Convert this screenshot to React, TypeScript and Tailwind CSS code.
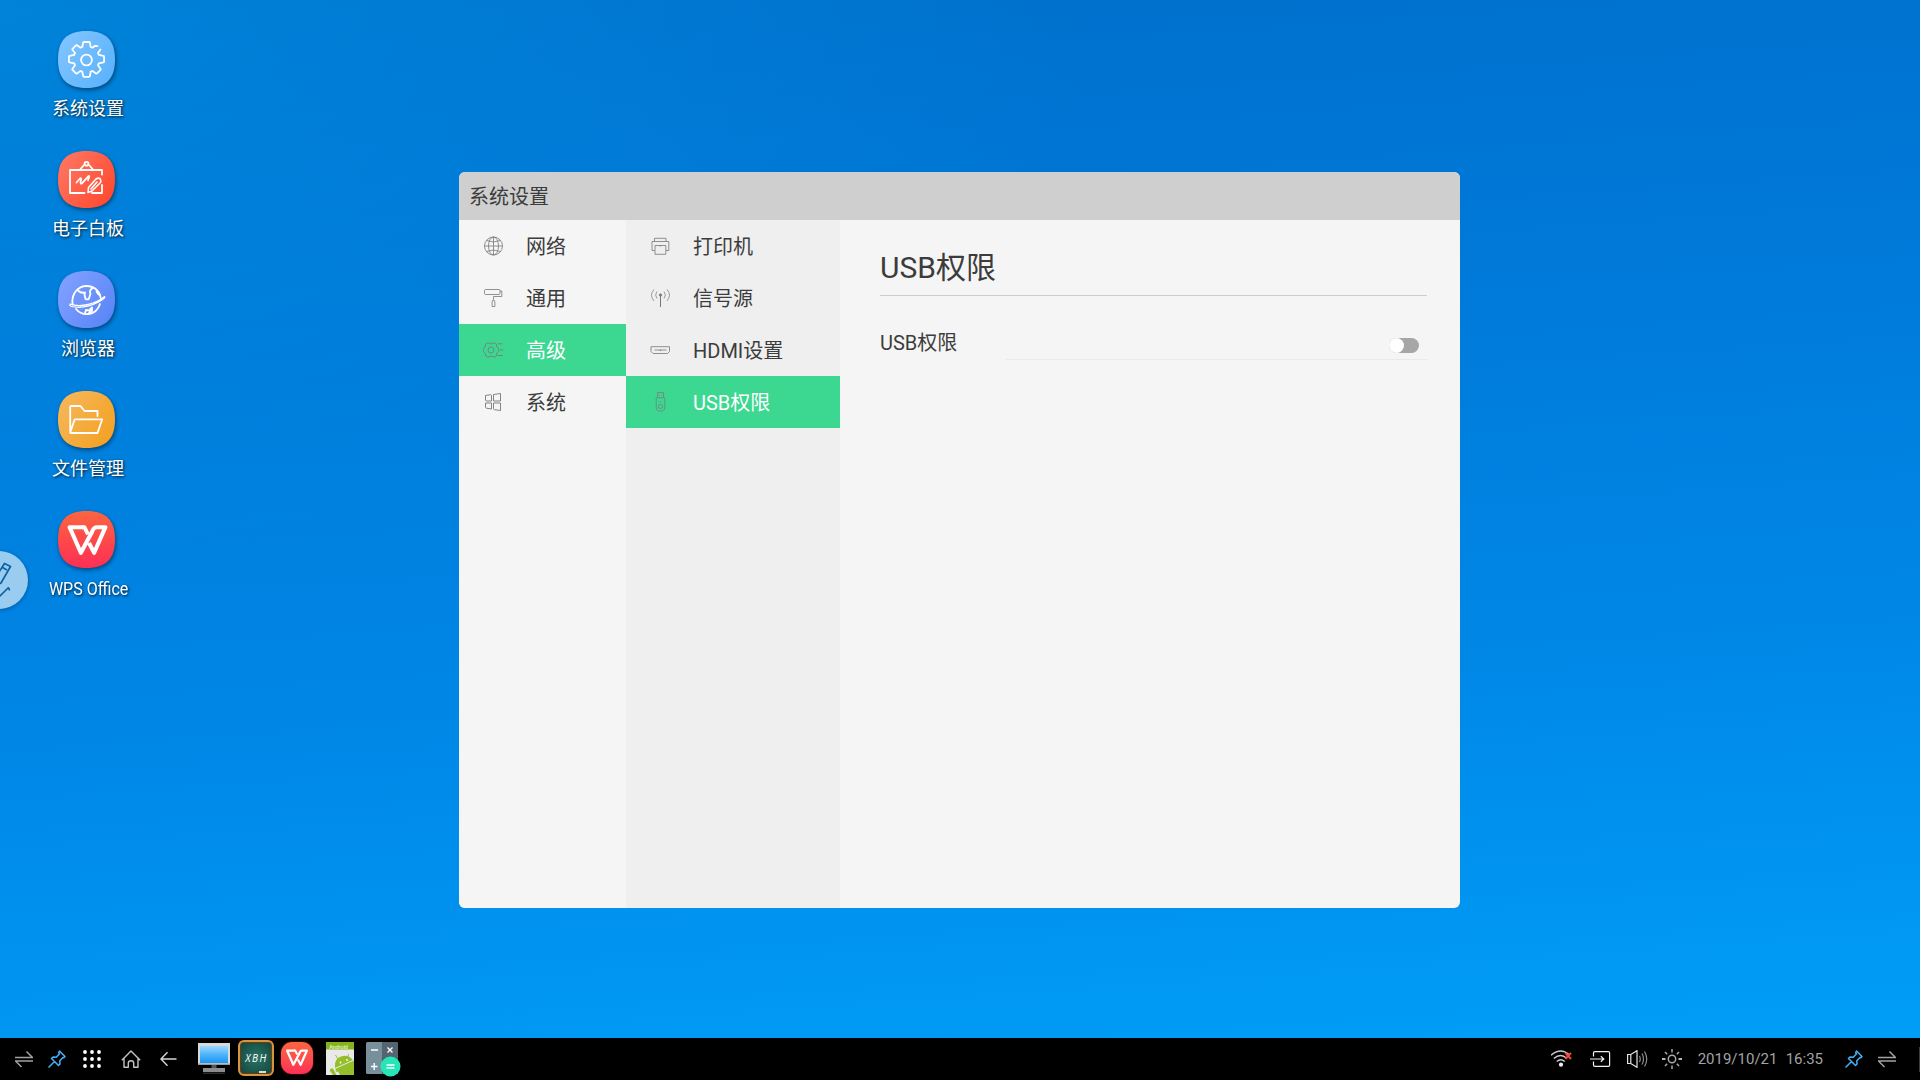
import React from 'react';

type IconProps = { className?: string };

function Globe({ className }: IconProps) {
  return (
    <svg className={className} width="20" height="20" viewBox="0 0 20 20" fill="none" stroke="currentColor" strokeWidth="0.8">
      <circle cx="10.500" cy="10" r="9" />
      <ellipse cx="10.500" cy="10" rx="5" ry="9" />
      <path d="M10.500 1v18M1.500 10h18M3.700 4.500q6.800 3 13.600 0M3.700 15.500q6.800-3 13.600 0" />
    </svg>
  );
}

function Roller({ className }: IconProps) {
  return (
    <svg className={className} width="20" height="20" viewBox="0 0 20 20" fill="none" stroke="currentColor" strokeWidth="0.8">
      <rect x="1.500" y="1.500" width="15.500" height="5" rx="1" />
      <path d="M17 3h1.800v5.500h-8.300v3M9.900 12h1.200l.8 2v4.500H9.100V14z" />
    </svg>
  );
}

function GearLines({ className }: IconProps) {
  return (
    <svg className={className} width="22" height="20" viewBox="0 0 22 20" fill="none" stroke="currentColor" strokeWidth="1" strokeLinejoin="round">
      <path d="M4.800 2.800Q8 5 11.200 2.800L13.300 4Q13.200 7.500 15.800 8.800V11.200Q13.200 12.500 13.300 16L11.200 17.200Q8 15 4.800 17.200L2.700 16Q2.800 12.500.2 11.200V8.800Q2.800 7.500 2.700 4z" />
      <circle cx="8" cy="10" r="3" />
      <path d="M14.500 3.800h5.200M17 10h3.200M14.500 15.500h5.200" />
    </svg>
  );
}

function Windows({ className }: IconProps) {
  return (
    <svg className={className} width="20" height="20" viewBox="0 0 20 20" fill="none" stroke="currentColor" strokeWidth="0.9" strokeLinejoin="round">
      <path d="M2.500 3.500l5-.8q1 0 1 1V9h-5q-1 0-1-1zM10.500 2.500l7-1V9h-7zM2.500 11h6v6l-5-.8q-1-.2-1-1zM10.500 11h7v7.500l-6-.8q-1-.2-1-1z" />
    </svg>
  );
}

function Printer({ className }: IconProps) {
  return (
    <svg className={className} width="20" height="20" viewBox="0 0 20 20" fill="none" stroke="currentColor" strokeWidth="0.8">
      <path d="M4.500 5.500v-3.200h11.500v3.200M4.500 14.500h-2.500v-9h16.800v9h-2.800M5 9.500h10.800v8.800H5z" />
      <path d="M9.900 10h1" strokeWidth="1" />
    </svg>
  );
}

function Antenna({ className }: IconProps) {
  return (
    <svg className={className} width="21" height="20" viewBox="0 0 21 20" fill="none" stroke="currentColor" strokeWidth="0.7">
      <circle cx="10.500" cy="7" r="1.200" fill="currentColor" />
      <path d="M10.500 8v11" strokeWidth="1" />
      <path d="M7 3.500q-2.800 3.500 0 7M14 3.500q2.800 3.500 0 7M4 1.500q-5 5.500 0 11.500M17 1.500q5 5.500 0 11.500" />
    </svg>
  );
}

function Hdmi({ className }: IconProps) {
  return (
    <svg className={className} width="20" height="20" viewBox="0 0 20 20" fill="none" stroke="currentColor" strokeWidth="0.8">
      <path d="M1 6.700h18.500v4.800L17.500 13.500H3L1 11.500zM4.500 10h12" />
      <path d="M9.900 10.300h1" strokeWidth="1.200" />
    </svg>
  );
}

function UsbStick({ className }: IconProps) {
  return (
    <svg className={className} width="20" height="20" viewBox="0 0 20 20" fill="none" stroke="currentColor" strokeWidth="0.9">
      <path d="M7.500 5.500v-5h6v5M9.200 2.500v1.200M11.800 2.500v1.200M10.500 9v1.200" />
      <path d="M6.200 5.700h8.600v9.500q0 4-4.300 4t-4.300-4z" />
      <circle cx="10.500" cy="14.500" r="2.100" />
    </svg>
  );
}

function WpsGlyph({ className }: IconProps) {
  return (
    <svg className={className} viewBox="0 0 42 32" fill="none">
      <path d="M17 3H3.500L14.500 28 25 8.500Q26.500 3.200 30 3H38.500L27.500 28 22.500 18.500" stroke="currentColor" strokeWidth="4" strokeLinejoin="round" />
      <path d="M15.500 3h2.500l3.500 7" stroke="currentColor" strokeWidth="3.800" strokeLinejoin="round" />
    </svg>
  );
}

const stroke = { fill: 'none', stroke: 'white', strokeWidth: 1.8, strokeLinecap: 'round', strokeLinejoin: 'round' } as const;

function SettingsArt() {
  return (
    <svg width="57" height="57" viewBox="0 0 57 57" {...stroke}>
      <path d="M39.500 15.200 37 14.800 34.500 16.700 32.700 16 31.800 11.500Q31.700 11 31 11h-5q-.7 0-.8.500L24.300 16l-1.800.7L19 14.200q-.5-.3-1 .1l-3.500 3.500q-.4.500-.1 1L17 22l-.8 1.900-4.700.9q-.6.100-.6.800v5q0 .7.600.8l4.700 1 .8 1.800-2.600 3.700q-.3.500.1 1L18 42.400q.5.400 1 .1l3.500-2.500 1.800.7.900 4.500q.1.700.8.700h5q.7 0 .8-.7l.9-4.500 1.800-.7 3.500 2.500q.5.300 1-.1l3.500-3.500q.4-.5.100-1L40 34.200l.8-1.800 4.700-1q.6-.1.600-.8v-5q0-.7-.6-.8l-4.700-.9L40 22l2.400-3.500" />
      <circle cx="28.500" cy="29" r="5.400" />
    </svg>
  );
}

function BoardArt() {
  return (
    <svg width="57" height="57" viewBox="0 0 57 57" {...stroke}>
      <path d="M44 23.500V19H12v23h14.500M34 42h10v-8M22 18.500l4.500-5M35 18.500l-4.500-5" />
      <circle cx="28.500" cy="12.800" r="1.900" />
      <path d="M18.500 31.500l3.500-4q1-.8 1.200.5l-.7 3.500q.1 2 1.700.7l6.300-7q1-.8.700.5l-1.200 3.500" />
      <path d="M30 41.500l.5-5 7.500-8.500q3-2 4.500.5 1 2-.5 3.500L34 40z M33 38l6-7" strokeWidth="1.600" />
    </svg>
  );
}

function BrowserArt() {
  return (
    <svg width="57" height="57" viewBox="0 0 57 57" {...stroke}>
      <path d="M14.600 33.500C13 23 20 15 28.500 15S42 21 42.700 27M18 38c6 7.500 20 7.500 24-5" />
      <path d="M12 34.500l1.500 1C24 38 38 34 46.500 27l.3-1.500C38 32.500 23 37 12 33z" strokeWidth="1.200" />
      <path d="M20 19.500q3 3 7 2l-.5 2 1 4.500q2 1 3.500-.5l1.500-5q-2-2 2-5.500M38.500 20.500l2 3M27 42l1-3 3 .5 3-3v3.500l-2 2.500M31 42l2-2" />
    </svg>
  );
}

function FolderArt() {
  return (
    <svg width="57" height="57" viewBox="0 0 57 57" {...stroke}>
      <path d="M39.500 25v-5H26.500l-4-5H13q-.8 0-.8.800V41.500l4.500-13.200h27.500L39.500 42H12.500" />
    </svg>
  );
}

function WpsArt() {
  return (
    <div className="flex size-[57px] items-center justify-center text-white">
      <WpsGlyph className="mt-[2px] ml-[2px] h-[33px] w-[43px]" />
    </div>
  );
}

const squircle =
  'M28.500 0C48 0 57 9 57 28.500S48 57 28.500 57 0 48 0 28.500 9 0 28.500 0z';

const desktopItems = [
  { label: '系统设置', from: '#84c6ff', to: '#5cb3fc', vertical: false, Art: SettingsArt },
  { label: '电子白板', from: '#ff7a67', to: '#ff4b31', vertical: false, Art: BoardArt },
  { label: '浏览器', from: '#83a3ff', to: '#5c86f8', vertical: false, Art: BrowserArt },
  { label: '文件管理', from: '#f5b95e', to: '#f4a226', vertical: false, Art: FolderArt },
  { label: 'WPS Office', from: '#fc6540', to: '#fd2f55', vertical: true, Art: WpsArt },
];

function DesktopIcons() {
  return (
    <div className="flex w-[177px] flex-col pt-[31px]">
      {desktopItems.map(({ label, from, to, vertical, Art }, i) => (
        <div key={label} className="flex h-[120px] flex-col items-center">
          <div className="relative mr-[4px] size-[57px] drop-shadow-[1px_2px_2px_rgba(0,0,0,0.45)]">
            <svg className="absolute inset-0" width="57" height="57" viewBox="0 0 57 57">
              <defs>
                <linearGradient id={`tile${i}`} x1="0" y1="0" x2={vertical ? 0 : 1} y2={vertical ? 1 : 0.7}>
                  <stop offset="0" stopColor={from} />
                  <stop offset="1" stopColor={to} />
                </linearGradient>
              </defs>
              <path d={squircle} fill={`url(#tile${i})`} />
            </svg>
            <div className="relative">
              <Art />
            </div>
          </div>
          <span
            className={
              'mt-[8px] text-[18px] leading-[26px] whitespace-nowrap text-white [text-shadow:1px_1px_3px_rgba(0,0,0,0.85)] ' +
              (vertical ? 'scale-x-[0.89]' : 'mr-px')
            }
          >
            {label}
          </span>
        </div>
      ))}
    </div>
  );
}

function MenuRow({ label, Icon, active }: { label: string; Icon: (p: IconProps) => React.ReactElement; active?: boolean }) {
  return (
    <div className={'flex h-[52px] items-center pl-[24px] text-[20px] ' + (active ? 'bg-[#3cd891] text-white' : 'text-[#3c3c3c]')}>
      <div className="-mt-px flex w-[43px] shrink-0">
        <Icon className={active ? 'text-[#6f8a7d]' : 'text-[#777777]'} />
      </div>
      <span className="pt-[2px] leading-[28px]">{label}</span>
    </div>
  );
}

function SettingsWindow() {
  return (
    <section className="flex h-[736px] w-[1001px] flex-col overflow-hidden rounded-[6px] bg-[#f5f5f5]">
      <header className="flex h-[48px] shrink-0 items-center bg-[#cfcfcf] pt-[2px] pl-[10px] text-[20px] text-[#3c3c3c]">系统设置</header>
      <div className="flex min-h-0 flex-1">
        <nav className="w-[167px] bg-[#f5f5f5]">
          <MenuRow label="网络" Icon={Globe} />
          <MenuRow label="通用" Icon={Roller} />
          <MenuRow label="高级" Icon={GearLines} active />
          <MenuRow label="系统" Icon={Windows} />
        </nav>
        <nav className="w-[214px] bg-[#efefef]">
          <MenuRow label="打印机" Icon={Printer} />
          <MenuRow label="信号源" Icon={Antenna} />
          <MenuRow label="HDMI设置" Icon={Hdmi} />
          <MenuRow label="USB权限" Icon={UsbStick} active />
        </nav>
        <main className="flex-1 pt-[24px] pr-[33px] pl-[40px] text-[#3c3c3c]">
          <h1 className="h-[52px] border-b border-[#cdcdcd] text-[30px] leading-[48px]">USB权限</h1>
          <div className="flex h-[64px] items-end">
            <span className="w-[126px] self-start pt-[32px] text-[20px] leading-[30px]">USB权限</span>
            <div className="flex h-[22px] flex-1 justify-end border-b border-[#eaeaea] pr-[8px]">
              <div className="flex h-[15px] w-[30px] rounded-full bg-[#a6a6a6]">
                <div className="size-[15px] rounded-full bg-white" />
              </div>
            </div>
          </div>
        </main>
      </div>
    </section>
  );
}

function Swap() {
  return (
    <svg width="18" height="18" viewBox="0 0 18 18" fill="none" stroke="#a3a3a3" strokeWidth="1.500">
      <path d="M0 7.500h17.500L11.500 1.500M18 11H.5l6 6" />
    </svg>
  );
}

function Pin() {
  return (
    <svg width="18" height="18" viewBox="0 0 18 18" fill="none" stroke="#45b0fa" strokeWidth="1.500" strokeLinejoin="round">
      <path d="M11.500 1l5.500 5.500-1.200 1.300-.8-.3-3.200 3.200.2 3.300-1.500 1.500-7-7L5 7l3.300.2 3.200-3.400-.8-1.300zM6.500 11.500L.5 17.500" />
    </svg>
  );
}

function Monitor() {
  return (
    <svg width="32" height="31" viewBox="0 0 32 31">
      <defs>
        <linearGradient id="screen" x1="0" y1="0" x2="0" y2="1">
          <stop offset="0" stopColor="#9bd8ff" />
          <stop offset="0.5" stopColor="#4fb4fb" />
          <stop offset="1" stopColor="#1d96f5" />
        </linearGradient>
      </defs>
      <rect width="32" height="22" fill="#d9d9d9" />
      <rect y="20.500" width="32" height="1.500" fill="#9a9a9a" />
      <rect x="2" y="3" width="28" height="17" fill="url(#screen)" />
      <path d="M13.500 22h5v3h-5z" fill="#555" />
      <path d="M5 25h22v4H5z" fill="#8c8c8c" />
      <path d="M5 29.500h22V31H5z" fill="#2a2a2a" />
    </svg>
  );
}

function Chalkboard() {
  return (
    <div className="relative flex size-[36px] items-center justify-center rounded-[6px] border-2 border-[#d9953c] bg-[#6b3d12] p-px">
      <div className="flex size-full items-center justify-center rounded-[3px] bg-radial from-[#2b7566] to-[#12473f]">
        <span className="pl-px text-[10px] leading-none font-medium tracking-[1.500px] text-white italic [font-family:'Open_Sans',sans-serif]">XBH</span>
      </div>
      <div className="absolute right-[6px] bottom-[1px] h-[2px] w-[7px] bg-[#d8dedb]" />
    </div>
  );
}

function AndroidFile() {
  return (
    <svg width="28" height="33" viewBox="0 0 28 33">
      <rect width="28" height="33" fill="#e9e9e9" />
      <rect width="28" height="7.500" fill="#86b320" />
      <text x="3" y="7" fontSize="6" fontWeight="bold" fill="#d5e8a4" fontFamily="Roboto" textLength="19">Android</text>
      <g fill="#94bf2a">
        <path d="M9 25q-1-8 6-10.500T27 18l1 .8V24L10 30z" />
        <path d="M11.500 28.500L28 21v12H14zM4.500 27q2-1.500 3 .5l3 5.500H7L4 29q-.5-1 .5-2z" />
        <path d="M12 17l-2.500-4M22 15l.5-3" stroke="#94bf2a" strokeWidth="0.900" />
      </g>
      <path d="M9 26.500l19-8.500" stroke="#e9e9e9" strokeWidth="1" />
      <circle cx="14.500" cy="20.500" r="0.900" fill="#fff" />
      <circle cx="21" cy="18" r="0.900" fill="#fff" />
    </svg>
  );
}

function Calculator() {
  return (
    <svg width="35" height="35" viewBox="0 0 35 35" fill="none" stroke="white" strokeWidth="1.400">
      <rect width="32" height="32" rx="1.500" fill="#78909c" stroke="none" />
      <path d="M16 0h14.500Q32 0 32 1.500V16H16z" fill="#546470" stroke="none" />
      <path d="M16 16h16v16H16z" fill="#455a64" stroke="none" />
      <path d="M5 8h7M5 24.500h6.500M8.200 21v7M21.500 5.500l5 5M26.500 5.500l-5 5" />
      <circle cx="24.500" cy="24.500" r="10" fill="#26e6b8" stroke="none" />
      <path d="M20.500 23h8M20.500 26h8" />
    </svg>
  );
}

function Taskbar() {
  return (
    <footer className="flex h-[42px] w-full items-center bg-black text-[#a3a3a3]">
      <div className="flex flex-1 items-center">
        <div className="-mt-px ml-[15px]"><Swap /></div>
        <div className="-mt-px ml-[15px]"><Pin /></div>
        <svg className="-mt-px ml-[17px]" width="18" height="18" viewBox="0 0 18 18" fill="white">
          {[2, 9, 16].flatMap((y) => [2, 9, 16].map((x) => <circle key={`${x}-${y}`} cx={x} cy={y} r="1.900" />))}
        </svg>
        <svg className="-mt-px ml-[20px]" width="20" height="18" viewBox="0 0 20 18" fill="none" stroke="#c4c4c4" strokeWidth="1.400" strokeLinejoin="round">
          <path d="M.8 10.200L10 1l9.200 9.200M3 8.500v8.700h4.300V13q0-2.300 2.700-2.300t2.700 2.300v4.200H17V8.500" />
        </svg>
        <svg className="-mt-px ml-[19px]" width="17" height="16" viewBox="0 0 17 16" fill="none" stroke="#d6d6d6" strokeWidth="1.400">
          <path d="M16.500 8H1.200M7.500 1.200L1 8l6.500 6.800" />
        </svg>
        <div className="-mt-px ml-[21px]"><Monitor /></div>
        <div className="-mt-[3px] ml-[8px]"><Chalkboard /></div>
        <div className="-mt-[3px] ml-[7px] flex size-[32px] items-center justify-center rounded-[11px] bg-linear-to-b from-[#fc6540] to-[#fd2f55] text-white shadow-[0_0_2px_rgba(253,70,80,0.6)]">
          <WpsGlyph className="h-[18px] w-[24px]" />
        </div>
        <div className="-mt-px ml-[13px]"><AndroidFile /></div>
        <div className="mt-px ml-[12px]"><Calculator /></div>
      </div>
      <div className="flex items-center">
        <svg className="-mt-px" width="21" height="17" viewBox="0 0 21 17" fill="none" stroke="#c9c9c9" strokeWidth="1.500">
          <path d="M0 5.200Q9.500-3 18 4.500M2.800 8.500q7-6 13 0M5.800 11.500q4-3.500 8 0" />
          <circle cx="10" cy="14.700" r="2.100" fill="#eee" stroke="none" />
          <path d="M14.500 3l5.500 6M20 3l-5.500 6" stroke="#f04a35" strokeWidth="2" />
        </svg>
        <svg className="-mt-px ml-[18px]" width="21" height="16" viewBox="0 0 21 16" fill="none" stroke="#f0f0f0" strokeWidth="1.200">
          <path d="M3.500 5.500V2q0-1.300 1.300-1.300h13.500q1.300 0 1.300 1.300v12q0 1.300-1.300 1.300H4.800Q3.500 15.300 3.500 14v-3.500M0 8h13.500M10.800 5.300L13.800 8l-3 2.700" />
        </svg>
        <svg className="-mt-px ml-[16px]" width="21" height="18" viewBox="0 0 21 18" fill="none" stroke="#e4e4e4" strokeWidth="1.200">
          <path d="M.6 4.500v9h3.200L10 17.300V.7L3.800 4.500zM3.800 4.500v9" />
          <path d="M12.500 6q1.500 3 0 6M15 3.500q3 5.500 0 11M17.500 1.500q4.500 7.500 0 15" stroke="#8c8c8c" />
        </svg>
        <svg className="ml-[14px]" width="20" height="20" viewBox="0 0 20 20" fill="none" stroke="#a8a8a8" strokeWidth="1.500">
          <circle cx="10" cy="10" r="3.700" />
          <path d="M10 0v3.500M10 16.500V20M3 3l2.200 2.200M14.800 14.800L17 17M3 17l2.200-2.200M14.800 5.200L17 3" />
          <path d="M0 10h3.500M16.500 10H20" stroke="#f0f0f0" />
        </svg>
        <span className="ml-[16px] w-[88px] text-[15px] leading-none whitespace-nowrap">2019/10/21</span>
        <span className="text-[15px] leading-none">16:35</span>
        <div className="-mt-px ml-[22px]"><Pin /></div>
        <div className="-mt-px ml-[15px]"><Swap /></div>
        <div className="ml-[23px] h-[25px] w-px bg-[#3a3a3a]" />
      </div>
    </footer>
  );
}

function FloatingPen() {
  return (
    <div className="absolute top-[551px] left-[-30px] size-[58px] rounded-full bg-[#9accef] shadow-[0_1px_4px_rgba(0,0,0,0.3)]">
      <svg width="58" height="58" viewBox="0 0 58 58" fill="none" stroke="#0b62a5" strokeWidth="1.700" strokeLinejoin="round">
        <path d="M34.500 12.500l6 3L31 32l-7 4 .5-8zM32.500 16.500l4.500 2.500M25 46q3-2 5-1l4-4 4-4q1-.5 1.500 2.500" />
      </svg>
    </div>
  );
}

export default function App() {
  return (
    <div
      className="relative flex h-[1080px] w-[1920px] flex-col overflow-hidden bg-[radial-gradient(ellipse_1100px_620px_at_0%_0%,rgba(0,150,232,0.5),rgba(0,150,232,0)),linear-gradient(176deg,#006fca_0%,#0079d9_30%,#0089e8_65%,#009df6_95%)] [font-family:Roboto,'Noto_Sans_CJK_SC',sans-serif]"
    >
      <div className="flex flex-1">
        <DesktopIcons />
        <div className="ml-[282px] pt-[172px]">
          <SettingsWindow />
        </div>
      </div>
      <Taskbar />
      <FloatingPen />
    </div>
  );
}
